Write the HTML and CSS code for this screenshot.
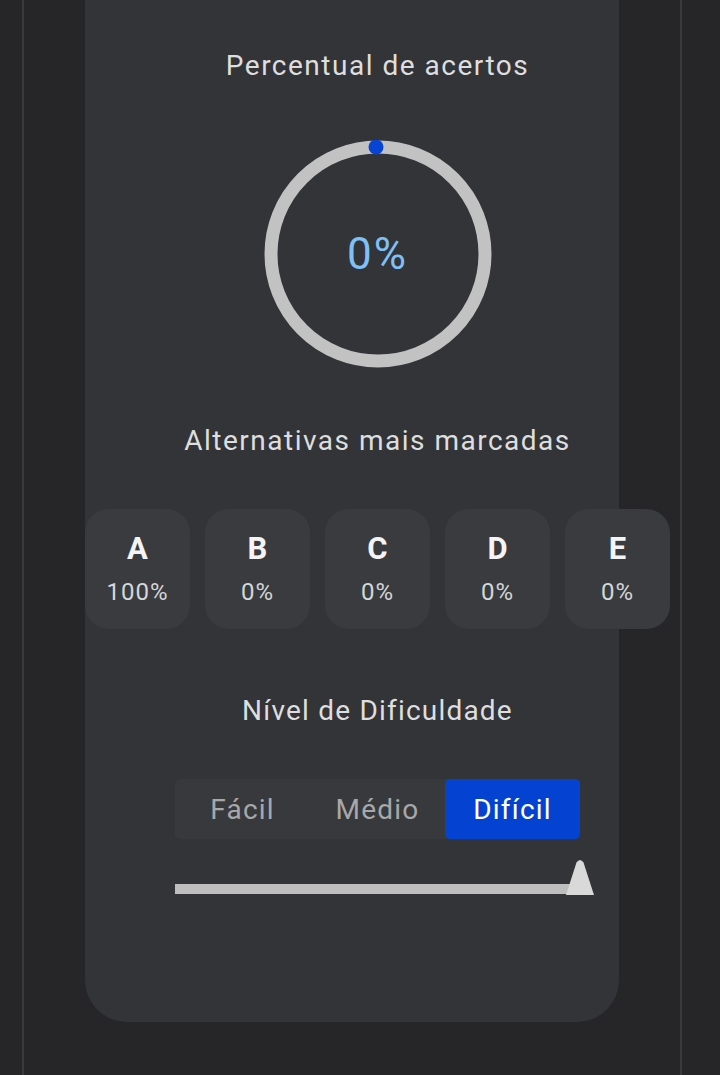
FILE: index.html
```html
<!DOCTYPE html>
<html lang="pt-BR">
<head>
    <meta charset="UTF-8">
    <meta name="viewport" content="width=device-width, initial-scale=1.0">
    <title>Resultado da questão</title>
    <link rel="stylesheet" href="styles.css">
</head>
<body>
    <div class="frame">
        <div class="card">
            <div class="content">
                <h2 class="section-title first">Percentual de acertos</h2>
                <div class="gauge">
                    <svg width="228" height="228" viewBox="0 0 228 228">
                        <circle cx="114" cy="114" r="107" fill="none" stroke="#c2c2c2" stroke-width="13"/>
                        <circle cx="112" cy="7" r="7.5" fill="#0744d4"/>
                    </svg>
                    <span class="gauge-value">0%</span>
                </div>

                <h2 class="section-title">Alternativas mais marcadas</h2>
                <div class="alternatives">
                    <div class="alt"><span class="alt-letter">A</span><span class="alt-pct">100%</span></div>
                    <div class="alt"><span class="alt-letter">B</span><span class="alt-pct">0%</span></div>
                    <div class="alt"><span class="alt-letter">C</span><span class="alt-pct">0%</span></div>
                    <div class="alt"><span class="alt-letter">D</span><span class="alt-pct">0%</span></div>
                    <div class="alt"><span class="alt-letter">E</span><span class="alt-pct">0%</span></div>
                </div>

                <h2 class="section-title level-title">Nível de Dificuldade</h2>
                <div class="segments">
                    <button class="segment">Fácil</button>
                    <button class="segment">Médio</button>
                    <button class="segment active">Difícil</button>
                </div>
                <div class="slider">
                    <div class="track"></div>
                    <svg class="thumb" width="28" height="36" viewBox="0 0 28 36">
                        <path d="M10.5 3.5 Q14 -1.5 17.5 3.5 L28 36 L0 36 Z" fill="#d9d9d9"/>
                    </svg>
                </div>
            </div>
        </div>
    </div>
</body>
</html>
```

FILE: styles.css
```css
body {
    margin: 0;
    background-color: #262628;
    font-family: Roboto, "Liberation Sans", sans-serif;
}
.frame {
    margin: 0 0 0 22px;
    width: 656px;
    min-height: 1075px;
    border-left: 2px solid #3a3a3c;
    border-right: 2px solid #3a3a3c;
}
.card {
    margin-left: 61px;
    width: 534px;
    height: 1022px;
    background-color: #333438;
    border-radius: 0 0 42px 42px;
}
.content {
    width: 585px;
    display: flex;
    flex-direction: column;
    align-items: center;
}
.section-title {
    margin: 0;
    font-size: 28px;
    font-weight: 400;
    line-height: 34px;
    letter-spacing: 1.5px;
    color: #dedede;
    margin-top: 56px;
    margin-bottom: 51px;
}
.section-title.first {
    margin-top: 49px;
    margin-bottom: 57px;
}
.section-title.level-title {
    margin-top: 65px;
    letter-spacing: 1.2px;
}
.gauge {
    display: grid;
    place-items: center;
}
.gauge svg,
.gauge-value {
    grid-area: 1 / 1;
}
.gauge-value {
    font-size: 44px;
    letter-spacing: 2px;
    color: #7fc0f6;
}
.alternatives {
    display: flex;
    gap: 15px;
}
.alt {
    width: 105px;
    height: 120px;
    box-sizing: border-box;
    padding-top: 22px;
    border-radius: 24px;
    background-color: #3a3b3f;
    display: flex;
    flex-direction: column;
    align-items: center;
    gap: 11px;
}
.alt-letter {
    font-size: 31px;
    font-weight: 700;
    line-height: 36px;
    color: #f4f4f4;
}
.alt-pct {
    font-size: 24px;
    line-height: 28px;
    letter-spacing: 1px;
    color: #d6d6d6;
}
.segments {
    display: grid;
    grid-template-columns: repeat(3, 135px);
    height: 60px;
    background-color: #38393d;
    border-radius: 5px;
}
.segment {
    border: none;
    background: none;
    font-family: inherit;
    font-size: 28px;
    letter-spacing: 1.2px;
    color: #a8a8a8;
    border-radius: 5px;
    padding: 0;
}
.segment.active {
    background-color: #0443d1;
    color: #ffffff;
}
.slider {
    position: relative;
    width: 405px;
    height: 36px;
    margin-top: 20px;
}
.track {
    margin-top: 25px;
    height: 10px;
    background-color: #bebebe;
}
.thumb {
    position: absolute;
    left: 391px;
    top: 0;
}
```
